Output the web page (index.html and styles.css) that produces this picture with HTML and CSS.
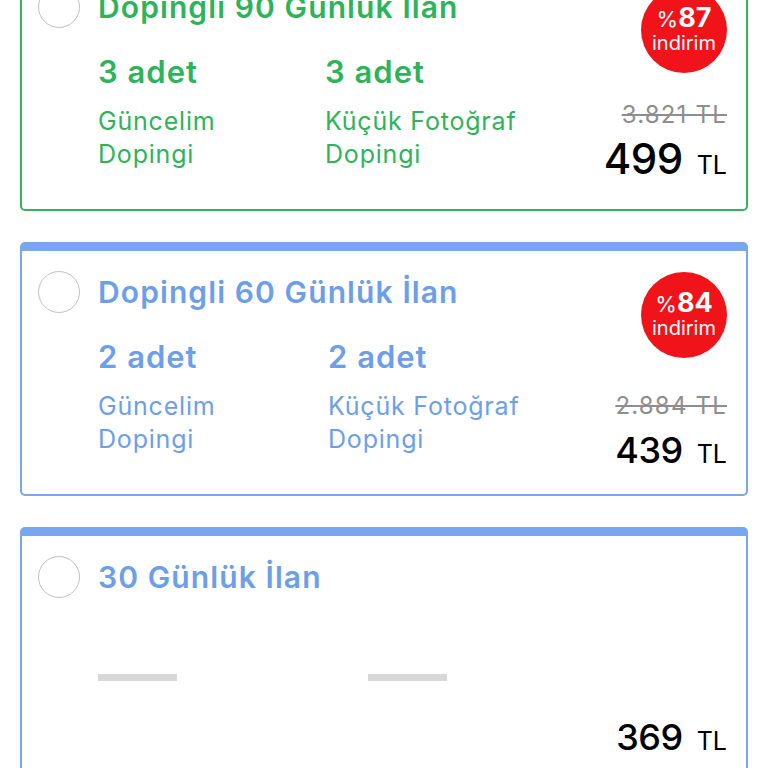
FILE: index.html
```html
<!DOCTYPE html>
<html lang="tr">
<head>
<meta charset="utf-8">
<title>İlan Paketleri</title>
<link rel="stylesheet" href="styles.css">
</head>
<body>
<div class="list">
  <div class="card card--green">
    <div class="main">
      <div class="head"><span class="radio"></span><h2 class="title">Dopingli 90 Günlük İlan</h2></div>
      <div class="cols cols--a">
        <div class="col"><div class="qty">3 adet</div><div class="desc">Güncelim<br>Dopingi</div></div>
        <div class="col"><div class="qty">3 adet</div><div class="desc">Küçük Fotoğraf<br>Dopingi</div></div>
      </div>
    </div>
    <div class="price price--big">
      <div class="badge"><div class="badge-top"><span class="pct">%</span><b>87</b></div><div class="badge-sub">indirim</div></div>
      <div class="old">3.821 TL</div>
      <div class="now"><span class="amount">499</span><span class="cur">TL</span></div>
    </div>
  </div>

  <div class="card card--blue">
    <div class="main">
      <div class="head"><span class="radio"></span><h2 class="title">Dopingli 60 Günlük İlan</h2></div>
      <div class="cols cols--b">
        <div class="col"><div class="qty">2 adet</div><div class="desc">Güncelim<br>Dopingi</div></div>
        <div class="col"><div class="qty">2 adet</div><div class="desc">Küçük Fotoğraf<br>Dopingi</div></div>
      </div>
    </div>
    <div class="price">
      <div class="badge"><div class="badge-top"><span class="pct">%</span><b>84</b></div><div class="badge-sub">indirim</div></div>
      <div class="old">2.884 TL</div>
      <div class="now"><span class="amount">439</span><span class="cur">TL</span></div>
    </div>
  </div>

  <div class="card card--blue">
    <div class="main">
      <div class="head"><span class="radio"></span><h2 class="title">30 Günlük İlan</h2></div>
      <div class="cols cols--c">
        <div class="col"><div class="dash"></div></div>
        <div class="col"><div class="dash"></div></div>
      </div>
    </div>
    <div class="price">
      <div class="now"><span class="amount">369</span><span class="cur">TL</span></div>
    </div>
  </div>
</div>
</body>
</html>
```

FILE: styles.css
```css
html, body {
  margin: 0;
  padding: 0;
  background: #ffffff;
  overflow: hidden;
}
body {
  font-family: "Inter", "Liberation Sans", sans-serif;
  color: #000;
}
.list {
  display: flex;
  flex-direction: column;
  gap: 31px;
  margin-top: -43px;
  padding: 0 20px;
}
.card {
  display: flex;
  background: #fff;
  border: 2px solid;
  border-top-width: 9px;
  border-radius: 5px;
}
.card--green { border-color: #34b45e; color: #2fb35a; }
.card--blue { border-color: #78a6f0; color: #6d9ee9; }
.main {
  flex: 1;
  padding: 23px 0 36px 16px;
}
.head {
  display: flex;
  align-items: center;
  gap: 18px;
  height: 36px;
}
.radio {
  width: 42px;
  height: 42px;
  box-sizing: border-box;
  border: 1.5px solid #c2c2c2;
  border-radius: 50%;
  flex: none;
}
.title {
  margin: 0;
  font-size: 30px;
  line-height: 36px;
  font-weight: 600;
  letter-spacing: 1.1px;
  white-space: nowrap;
}
.cols {
  display: grid;
  margin: 28px 0 0 60px;
  min-height: 120px;
}
.cols--a { grid-template-columns: 227px 1fr; }
.cols--b { grid-template-columns: 230px 1fr; }
.cols--c { grid-template-columns: 270px 1fr; }
.qty {
  font-size: 31px;
  line-height: 38px;
  font-weight: 600;
  letter-spacing: 1px;
}
.desc {
  margin-top: 14px;
  font-size: 25px;
  line-height: 33px;
  font-weight: 400;
  letter-spacing: 0.8px;
  white-space: nowrap;
}
.dash {
  margin-top: 51px;
  width: 79px;
  height: 7px;
  background: #d8d8d8;
}
.price {
  display: flex;
  flex-direction: column;
  align-items: flex-end;
  padding: 21px 19px 0 0;
  color: #000;
}
.badge {
  width: 86px;
  height: 86px;
  border-radius: 50%;
  background: #f0141a;
  color: #fff;
  display: flex;
  flex-direction: column;
  align-items: center;
  justify-content: center;
}
.badge-top {
  font-size: 22px;
  line-height: 25px;
}
.badge-top b {
  font-size: 27px;
  font-weight: 700;
}
.badge-sub {
  font-size: 20px;
  line-height: 23px;
}
.old {
  margin-top: 33px;
  font-size: 24px;
  line-height: 30px;
  color: #8e8e8e;
  letter-spacing: 1.2px;
  text-decoration: line-through;
  text-decoration-thickness: 1.5px;
  white-space: nowrap;
}
.now {
  margin-top: 7px;
  font-size: 36px;
  line-height: 44px;
  white-space: nowrap;
}
.price .now:first-child { margin-top: auto; margin-bottom: 20px; }
.amount {
  font-size: 36px;
  font-weight: 500;
  letter-spacing: -0.5px;
}
.cur {
  font-size: 25px;
  line-height: 1;
  margin-left: 14px;
}
.price--big .old { margin-top: 27px; }
.price--big .now { margin-top: 4px; font-size: 42px; line-height: 50px; }
.price--big .amount { font-size: 42px; }
```
